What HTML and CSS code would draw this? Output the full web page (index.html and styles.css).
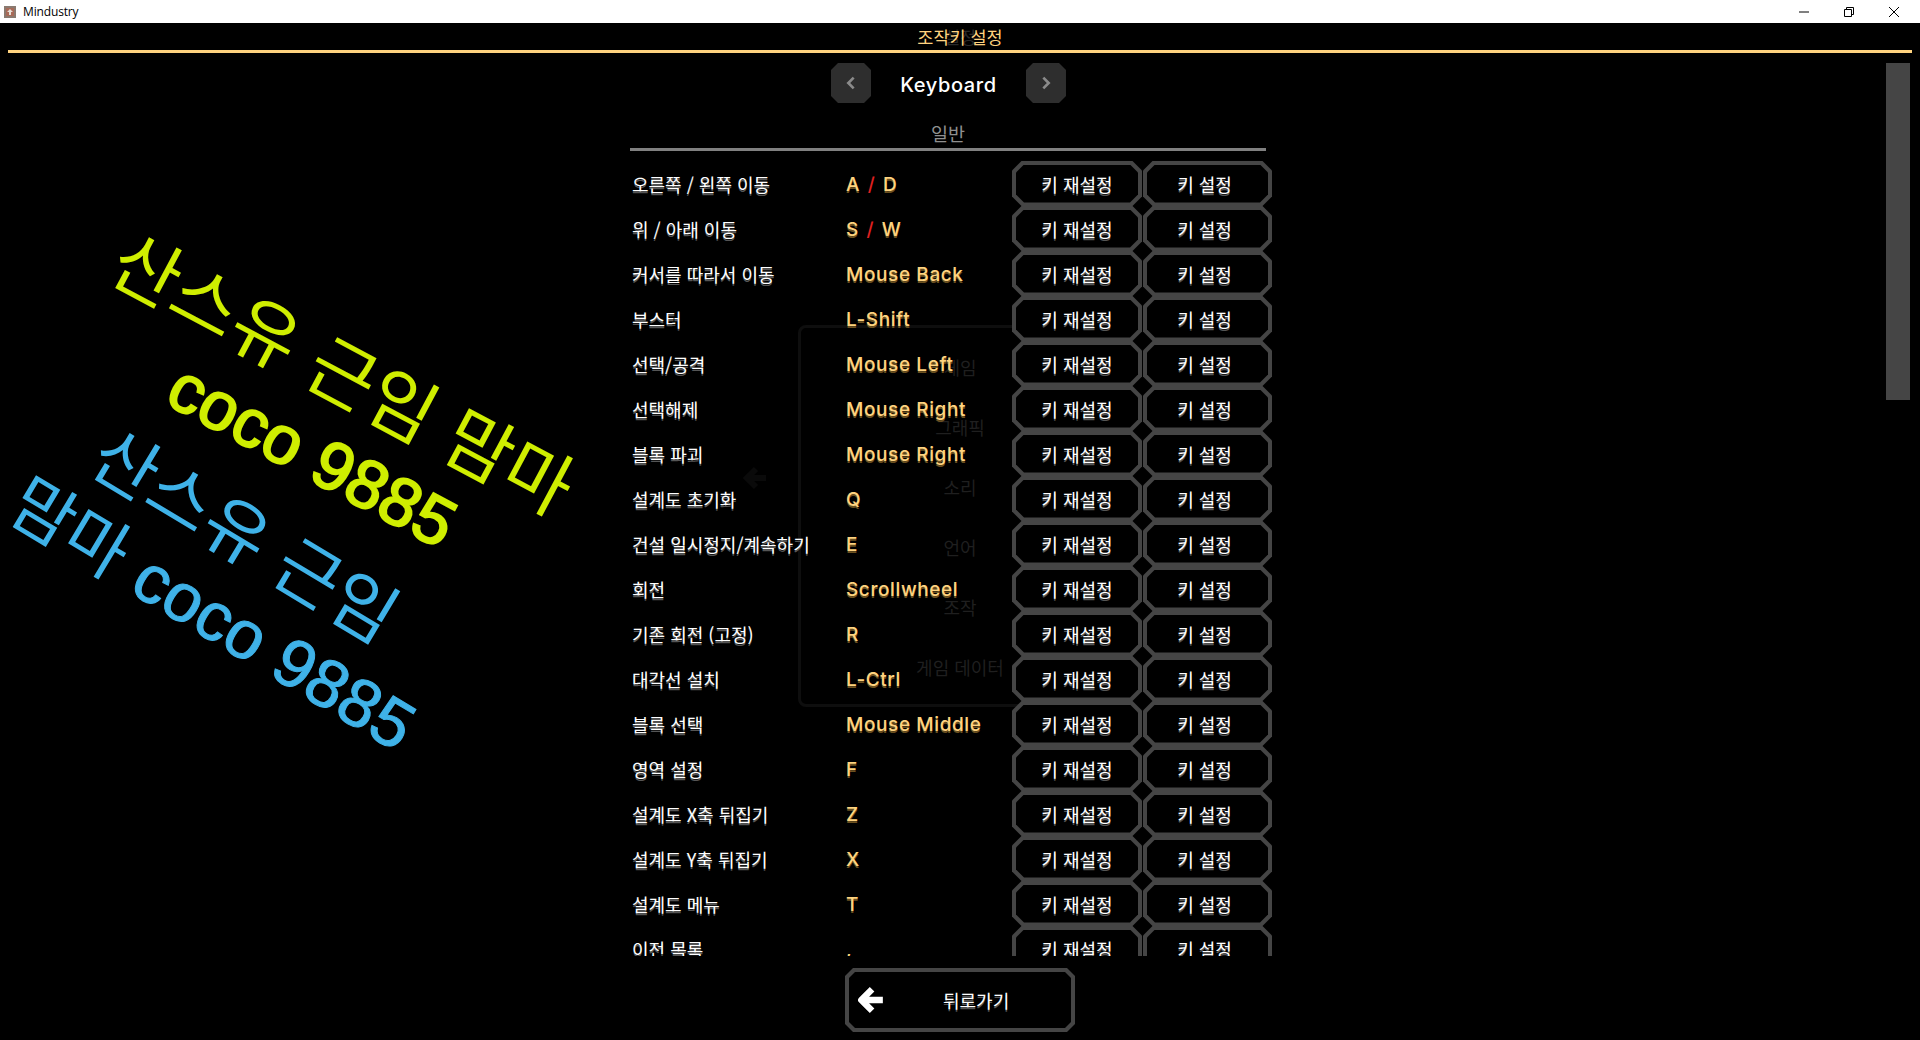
FILE: index.html
```html
<!DOCTYPE html>
<html lang="ko">
<head>
<meta charset="utf-8">
<title>Mindustry</title>
<link rel="stylesheet" href="styles.css">
</head>
<body>
<header class="titlebar">
  <svg class="app-icon" viewBox="0 0 12 12"><rect width="12" height="12" fill="#8a7a70"/><rect x="2" y="2" width="8" height="8" fill="#a86a58"/><path d="M6 3 9 6 7 6 7 9 5 9 5 6 3 6Z" fill="#e8e0d8"/></svg>
  <span class="app-name">Mindustry</span>
  <div class="win-controls">
    <svg viewBox="0 0 12 12"><path d="M1 6H11" stroke="#000" fill="none"/></svg>
    <svg viewBox="0 0 12 12"><path d="M1.5 3.5H8.5V10.5H1.5ZM3.5 3.5V1.5H10.5V8.5H8.5" stroke="#000" fill="none"/></svg>
    <svg viewBox="0 0 12 12"><path d="M1 1 11 11M11 1 1 11" stroke="#000" fill="none"/></svg>
  </div>
</header>

<main class="screen">
  <div class="heading">
    <span class="ghost-heading">설정</span>
    <span class="heading-text">조작키 설정</span>
  </div>
  <div class="heading-rule"></div>

  <div class="ghost-menu">
    <svg class="ghost-arrow" viewBox="0 0 24 24"><path d="M13 3 4 12 13 21M5 12H23" fill="none" stroke="#0a0a0a" stroke-width="6"/></svg>
    <span>게임</span><span>그래픽</span><span>소리</span><span>언어</span><span>조작</span><span>게임 데이터</span>
  </div>

  <div class="watermark wm-a">산스유 근임 맘마</div>
  <div class="watermark wm-b">coco 9885</div>
  <div class="watermark wm-c">산스유 근임</div>
  <div class="watermark wm-d"><span class="wm-kr">맘마</span> coco 9885</div>

  <div class="scrollbar"></div>

  <div class="device-nav">
    <button class="nav-btn"><svg viewBox="0 0 10 12"><path d="M7 2 3 6 7 10" fill="none" stroke="#8a8a8a" stroke-width="2"/></svg></button>
    <span class="device-name">Keyboard</span>
    <button class="nav-btn"><svg viewBox="0 0 10 12"><path d="M3 2 7 6 3 10" fill="none" stroke="#8a8a8a" stroke-width="2"/></svg></button>
  </div>

  <section class="bindings">
    <h2 class="section-title">일반</h2>
    <div class="rows">
      <div class="row"><span class="label">오른쪽 / 왼쪽 이동</span><span class="key">A <i>/</i> D</span><button class="kbtn">키 재설정</button><button class="kbtn">키 설정</button></div>
      <div class="row"><span class="label">위 / 아래 이동</span><span class="key">S <i>/</i> W</span><button class="kbtn">키 재설정</button><button class="kbtn">키 설정</button></div>
      <div class="row"><span class="label">커서를 따라서 이동</span><span class="key">Mouse Back</span><button class="kbtn">키 재설정</button><button class="kbtn">키 설정</button></div>
      <div class="row"><span class="label">부스터</span><span class="key">L-Shift</span><button class="kbtn">키 재설정</button><button class="kbtn">키 설정</button></div>
      <div class="row"><span class="label">선택/공격</span><span class="key">Mouse Left</span><button class="kbtn">키 재설정</button><button class="kbtn">키 설정</button></div>
      <div class="row"><span class="label">선택해제</span><span class="key">Mouse Right</span><button class="kbtn">키 재설정</button><button class="kbtn">키 설정</button></div>
      <div class="row"><span class="label">블록 파괴</span><span class="key">Mouse Right</span><button class="kbtn">키 재설정</button><button class="kbtn">키 설정</button></div>
      <div class="row"><span class="label">설계도 초기화</span><span class="key">Q</span><button class="kbtn">키 재설정</button><button class="kbtn">키 설정</button></div>
      <div class="row"><span class="label">건설 일시정지/계속하기</span><span class="key">E</span><button class="kbtn">키 재설정</button><button class="kbtn">키 설정</button></div>
      <div class="row"><span class="label">회전</span><span class="key">Scrollwheel</span><button class="kbtn">키 재설정</button><button class="kbtn">키 설정</button></div>
      <div class="row"><span class="label">기존 회전 (고정)</span><span class="key">R</span><button class="kbtn">키 재설정</button><button class="kbtn">키 설정</button></div>
      <div class="row"><span class="label">대각선 설치</span><span class="key">L-Ctrl</span><button class="kbtn">키 재설정</button><button class="kbtn">키 설정</button></div>
      <div class="row"><span class="label">블록 선택</span><span class="key">Mouse Middle</span><button class="kbtn">키 재설정</button><button class="kbtn">키 설정</button></div>
      <div class="row"><span class="label">영역 설정</span><span class="key">F</span><button class="kbtn">키 재설정</button><button class="kbtn">키 설정</button></div>
      <div class="row"><span class="label">설계도 X축 뒤집기</span><span class="key">Z</span><button class="kbtn">키 재설정</button><button class="kbtn">키 설정</button></div>
      <div class="row"><span class="label">설계도 Y축 뒤집기</span><span class="key">X</span><button class="kbtn">키 재설정</button><button class="kbtn">키 설정</button></div>
      <div class="row"><span class="label">설계도 메뉴</span><span class="key">T</span><button class="kbtn">키 재설정</button><button class="kbtn">키 설정</button></div>
      <div class="row"><span class="label">이전 목록</span><span class="key">,</span><button class="kbtn">키 재설정</button><button class="kbtn">키 설정</button></div>
    </div>
  </section>

  <div class="footer">
    <button class="back-btn">
      <svg class="back-icon" viewBox="0 0 26 26"><path d="M14 3 4 13 14 23M5 13H24" fill="none" stroke="#fff" stroke-width="6" stroke-linejoin="round"/></svg>
      <span>뒤로가기</span>
    </button>
  </div>
</main>
</body>
</html>
```

FILE: styles.css
```css
* { box-sizing: border-box; }
html, body { margin: 0; height: 100%; background: #000; overflow: hidden; }
body {
  display: flex;
  flex-direction: column;
  font-family: "Noto Sans CJK KR", "Noto Sans", sans-serif;
  color: #fff;
}
.titlebar {
  height: 23px;
  flex: none;
  background: #fff;
  display: flex;
  align-items: center;
  padding-left: 4px;
  color: #000;
}
.app-icon { width: 12px; height: 12px; }
.app-name { font: 12px "Open Sans", sans-serif; letter-spacing: -0.15px; margin-left: 7px; }
.win-controls { margin-left: auto; display: flex; gap: 33px; padding-right: 20px; }
.win-controls svg { width: 12px; height: 12px; }

.screen {
  position: relative;
  flex: 1;
  display: flex;
  flex-direction: column;
  min-height: 0;
  overflow: hidden;
  background: #000;
}
.heading {
  position: relative;
  height: 27px;
  flex: none;
  display: flex;
  justify-content: center;
  align-items: center;
  font-size: 17.5px;
}
.heading-text { position: relative; color: #ffd37f; }
.ghost-heading { position: absolute; color: #2a2a2a; }
.heading-rule { height: 3px; flex: none; margin: 0 8px; background: #ffd37f; }

.device-nav {
  flex: none;
  width: 235px;
  margin: 10px 0 0 831px;
  display: flex;
  align-items: center;
  justify-content: space-between;
  position: relative;
}
.nav-btn {
  width: 40px;
  height: 40px;
  padding: 0;
  border: 0;
  background: #2e2e2e;
  clip-path: polygon(7px 0, 33px 0, 100% 7px, 100% 33px, 33px 100%, 7px 100%, 0 33px, 0 7px);
  display: flex;
  align-items: center;
  justify-content: center;
}
.nav-btn svg { width: 14px; height: 16px; }
.device-name {
  font: 500 20px "Inter", sans-serif;
  letter-spacing: 0.6px;
  padding-top: 3px;
}

.bindings {
  position: relative;
  flex: none;
  width: 646px;
  margin: 10px 0 0 630px;
  display: flex;
  flex-direction: column;
}
.section-title {
  margin: 0;
  width: 636px;
  height: 38px;
  border-bottom: 3px solid #808080;
  text-align: center;
  font-weight: 400;
  font-size: 18.5px;
  line-height: 41px;
  color: #8f8f8f;
}
.rows {
  height: 805px;
  padding-top: 10px;
  overflow: hidden;
  display: flex;
  flex-direction: column;
}
.row {
  height: 45px;
  flex: none;
  display: flex;
  align-items: center;
}
.label {
  width: 216px;
  font-size: 18px;
  padding-left: 2px;
  text-shadow: 0 2px 0 #555;
  white-space: nowrap;
}
.key {
  width: 166px;
  padding-top: 1px;
  font: 500 19px "Inter", sans-serif;
  letter-spacing: 0.6px;
  color: #ffd37f;
  text-shadow: 0 2px 0 #6b5020;
  white-space: nowrap;
}
.key i { font-style: normal; color: #e02020; text-shadow: none; padding: 0 2px; }
.kbtn {
  position: relative;
  width: 130px;
  height: 46px;
  margin-right: 1px;
  padding: 0;
  border: 0;
  background: #454545;
  color: #fff;
  font-family: inherit;
  font-size: 18px;
  text-shadow: 0 2px 0 #555;
  clip-path: polygon(10px 0, calc(100% - 10px) 0, 100% 10px, 100% calc(100% - 10px), calc(100% - 10px) 100%, 10px 100%, 0 calc(100% - 10px), 0 10px);
  z-index: 0;
}
.kbtn:last-child { width: 129px; padding-right: 6px; }
.kbtn::before {
  content: "";
  position: absolute;
  inset: 4px;
  background: #000;
  clip-path: polygon(8px 0, calc(100% - 8px) 0, 100% 8px, 100% calc(100% - 8px), calc(100% - 8px) 100%, 8px 100%, 0 calc(100% - 8px), 0 8px);
  z-index: -1;
}

.footer {
  flex: none;
  margin: 12px 0 0 845px;
}
.back-btn {
  position: relative;
  width: 230px;
  height: 64px;
  padding: 0 0 0 12px;
  border: 0;
  background: #454545;
  color: #fff;
  font-family: inherit;
  font-size: 18px;
  display: flex;
  align-items: center;
  clip-path: polygon(8px 0, calc(100% - 8px) 0, 100% 8px, 100% calc(100% - 8px), calc(100% - 8px) 100%, 8px 100%, 0 calc(100% - 8px), 0 8px);
  z-index: 0;
}
.back-btn::before {
  content: "";
  position: absolute;
  inset: 4px;
  background: #000;
  clip-path: polygon(6px 0, calc(100% - 6px) 0, 100% 6px, 100% calc(100% - 6px), calc(100% - 6px) 100%, 6px 100%, 0 calc(100% - 6px), 0 6px);
  z-index: -1;
}
.back-icon { width: 28px; height: 28px; }
.back-btn span { margin-left: 58px; padding-bottom: 1px; text-shadow: 0 2px 0 #555; }

.scrollbar {
  position: absolute;
  left: 1886px;
  top: 40px;
  width: 24px;
  height: 337px;
  background: #454545;
}

/* faded settings menu left behind the key list */
.ghost-menu {
  position: absolute;
  left: 798px;
  top: 302px;
  width: 324px;
  height: 382px;
  border: 3px solid #0e0e0e;
  border-radius: 8px;
  padding-top: 24px;
  display: flex;
  flex-direction: column;
  align-items: center;
  gap: 30px;
  font-size: 18px;
  line-height: 30px;
  color: #1f1f1f;
}
.ghost-arrow { position: absolute; left: -58px; top: 138px; width: 24px; height: 24px; }

/* free-placed rotated stream overlay lines */
.watermark {
  position: absolute;
  white-space: nowrap;
  transform-origin: 0 0;
  line-height: 1;
  font-family: "Liberation Sans", "Noto Sans CJK KR", sans-serif;
}
.wm-a { left: 134px; top: 200px; color: #cfee00; font-size: 73px; transform: rotate(28deg); }
.wm-b { left: 190px; top: 328px; color: #cfee00; font-size: 68px; -webkit-text-stroke: 2px #cfee00; transform: rotate(28deg); }
.wm-c { left: 116px; top: 396px; color: #3fb2e8; font-size: 70px; transform: rotate(31deg); }
.wm-d { left: 34px; top: 444px; color: #3fb2e8; font-size: 68px; -webkit-text-stroke: 1px #3fb2e8; transform: rotate(31deg); }
.wm-kr { -webkit-text-stroke: 0; }
```
